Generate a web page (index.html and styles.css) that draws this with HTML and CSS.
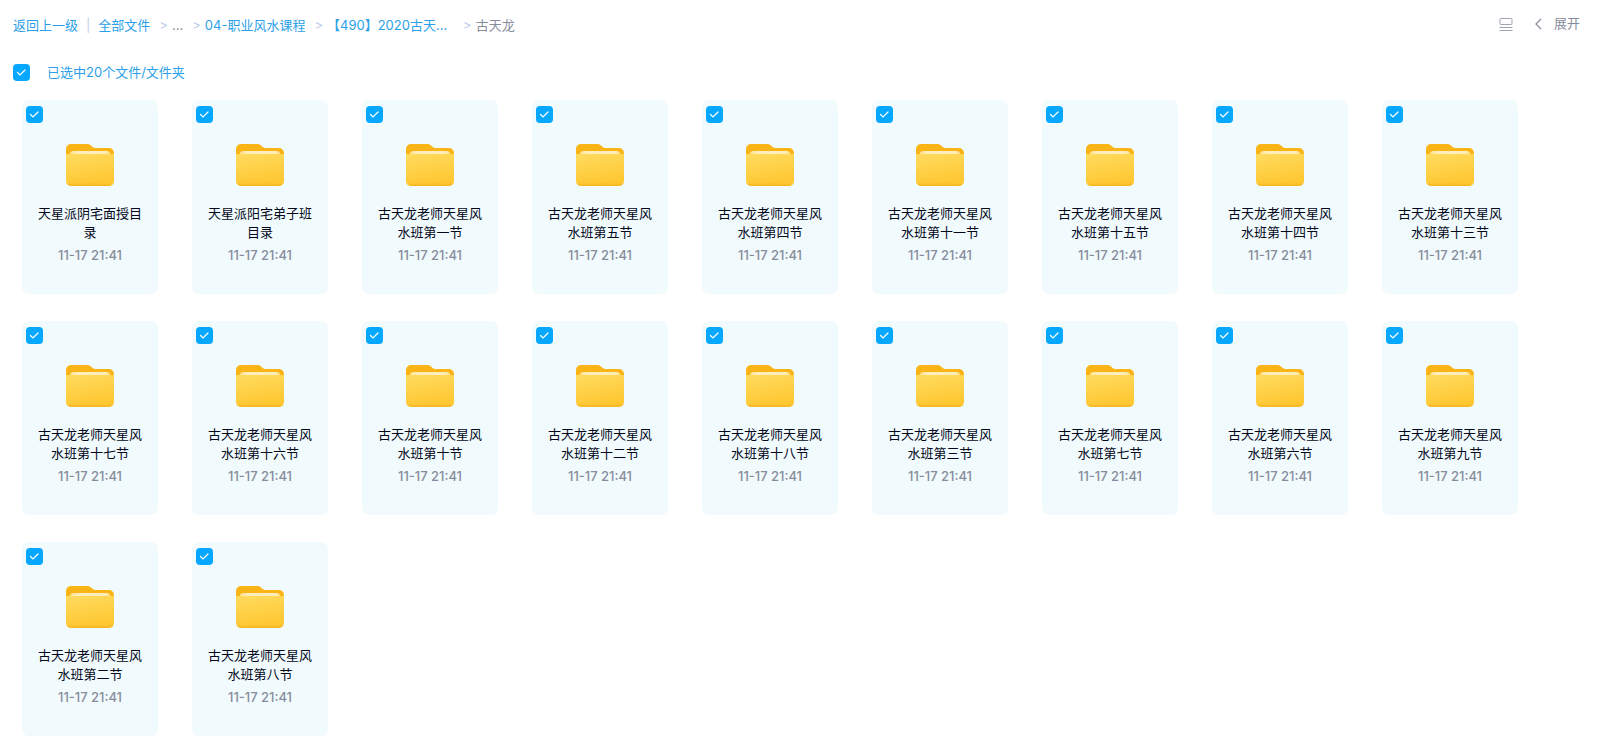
FILE: index.html
```html
<!DOCTYPE html>
<html lang="zh-CN">
<head>
<meta charset="utf-8">
<meta name="viewport" content="width=device-width, initial-scale=1">
<title>古天龙</title>
<link rel="stylesheet" href="styles.css">
</head>
<body>
<svg class="defs" aria-hidden="true">
  <defs>
    <linearGradient id="front" x1="0" y1="0" x2="0.25" y2="1"><stop offset="0" stop-color="#ffdb5f"/><stop offset="1" stop-color="#ffc732"/></linearGradient>
    <linearGradient id="edge" x1="0" y1="0" x2="0" y2="1"><stop offset="0.9" stop-color="#f5b520" stop-opacity="0"/><stop offset="1" stop-color="#f5b520"/></linearGradient>
    <linearGradient id="paper" x1="0" y1="0" x2="1" y2="0"><stop offset="0" stop-color="#ffe08a"/><stop offset="0.2" stop-color="#ffeebb"/><stop offset="0.85" stop-color="#ffeebb"/><stop offset="1" stop-color="#ffe08a"/></linearGradient>
    <symbol id="folder" viewBox="0 0 48 42">
      <path fill="#fbb416" d="M0 14V5a5 5 0 0 1 5-5h16c2 0 3 .6 4.300 1.800L27 3.200c.8.6 1.500.8 2.500.8H43a5 5 0 0 1 5 5v5z"/>
      <path fill="url(#paper)" d="M3.500 11c.5-2.500 1.500-4 4-4h33c2.500 0 3.500 1.500 4 4z"/>
      <path fill="url(#front)" d="M0 10h48v27a5 5 0 0 1-5 5H5a5 5 0 0 1-5-5z"/>
      <path fill="url(#edge)" d="M0 10h48v27a5 5 0 0 1-5 5H5a5 5 0 0 1-5-5z"/>
    </symbol>
  </defs>
</svg>
<header class="topbar">
  <nav class="crumbs" aria-label="路径">
    <a href="#">返回上一级</a><span class="bar">|</span><a href="#">全部文件</a><span class="sep">&gt;</span><span class="dots">...</span><span class="sep">&gt;</span><a href="#">04-职业风水课程</a><span class="sep">&gt;</span><a class="clipped" href="#">【490】2020古天...</a><span class="sep">&gt;</span><span class="current">古天龙</span>
  </nav>
  <div class="tools">
    <button class="view" type="button" aria-label="切换视图"><svg width="14" height="14" viewBox="0 0 14 14" fill="none" stroke="#a0a5b2"><rect x="1" y="1.500" width="12" height="6" rx="1"/><path d="M.5 10.500h13M.5 13.500h13"/></svg></button>
    <button class="expand" type="button"><svg width="7" height="12" viewBox="0 0 7 12" fill="none" stroke="#868b99" stroke-width="1.200"><path d="M6 1L1 6l5 5"/></svg>展开</button>
  </div>
</header>
<main>
  <div class="selection"><input type="checkbox" id="all" checked><label for="all">已选中20个文件/文件夹</label></div>
  <ul class="files">
    <li class="card"><input type="checkbox" id="f1" checked><svg class="folder"><use href="#folder"/></svg><label for="f1">天星派阴宅面授目录</label><time>11-17 21:41</time></li>
    <li class="card"><input type="checkbox" id="f2" checked><svg class="folder"><use href="#folder"/></svg><label for="f2">天星派阳宅弟子班目录</label><time>11-17 21:41</time></li>
    <li class="card"><input type="checkbox" id="f3" checked><svg class="folder"><use href="#folder"/></svg><label for="f3">古天龙老师天星风水班第一节</label><time>11-17 21:41</time></li>
    <li class="card"><input type="checkbox" id="f4" checked><svg class="folder"><use href="#folder"/></svg><label for="f4">古天龙老师天星风水班第五节</label><time>11-17 21:41</time></li>
    <li class="card"><input type="checkbox" id="f5" checked><svg class="folder"><use href="#folder"/></svg><label for="f5">古天龙老师天星风水班第四节</label><time>11-17 21:41</time></li>
    <li class="card"><input type="checkbox" id="f6" checked><svg class="folder"><use href="#folder"/></svg><label for="f6">古天龙老师天星风水班第十一节</label><time>11-17 21:41</time></li>
    <li class="card"><input type="checkbox" id="f7" checked><svg class="folder"><use href="#folder"/></svg><label for="f7">古天龙老师天星风水班第十五节</label><time>11-17 21:41</time></li>
    <li class="card"><input type="checkbox" id="f8" checked><svg class="folder"><use href="#folder"/></svg><label for="f8">古天龙老师天星风水班第十四节</label><time>11-17 21:41</time></li>
    <li class="card"><input type="checkbox" id="f9" checked><svg class="folder"><use href="#folder"/></svg><label for="f9">古天龙老师天星风水班第十三节</label><time>11-17 21:41</time></li>
    <li class="card"><input type="checkbox" id="f10" checked><svg class="folder"><use href="#folder"/></svg><label for="f10">古天龙老师天星风水班第十七节</label><time>11-17 21:41</time></li>
    <li class="card"><input type="checkbox" id="f11" checked><svg class="folder"><use href="#folder"/></svg><label for="f11">古天龙老师天星风水班第十六节</label><time>11-17 21:41</time></li>
    <li class="card"><input type="checkbox" id="f12" checked><svg class="folder"><use href="#folder"/></svg><label for="f12">古天龙老师天星风水班第十节</label><time>11-17 21:41</time></li>
    <li class="card"><input type="checkbox" id="f13" checked><svg class="folder"><use href="#folder"/></svg><label for="f13">古天龙老师天星风水班第十二节</label><time>11-17 21:41</time></li>
    <li class="card"><input type="checkbox" id="f14" checked><svg class="folder"><use href="#folder"/></svg><label for="f14">古天龙老师天星风水班第十八节</label><time>11-17 21:41</time></li>
    <li class="card"><input type="checkbox" id="f15" checked><svg class="folder"><use href="#folder"/></svg><label for="f15">古天龙老师天星风水班第三节</label><time>11-17 21:41</time></li>
    <li class="card"><input type="checkbox" id="f16" checked><svg class="folder"><use href="#folder"/></svg><label for="f16">古天龙老师天星风水班第七节</label><time>11-17 21:41</time></li>
    <li class="card"><input type="checkbox" id="f17" checked><svg class="folder"><use href="#folder"/></svg><label for="f17">古天龙老师天星风水班第六节</label><time>11-17 21:41</time></li>
    <li class="card"><input type="checkbox" id="f18" checked><svg class="folder"><use href="#folder"/></svg><label for="f18">古天龙老师天星风水班第九节</label><time>11-17 21:41</time></li>
    <li class="card"><input type="checkbox" id="f19" checked><svg class="folder"><use href="#folder"/></svg><label for="f19">古天龙老师天星风水班第二节</label><time>11-17 21:41</time></li>
    <li class="card"><input type="checkbox" id="f20" checked><svg class="folder"><use href="#folder"/></svg><label for="f20">古天龙老师天星风水班第八节</label><time>11-17 21:41</time></li>
  </ul>
</main>
</body>
</html>
```
FILE: styles.css
```css
* { box-sizing: border-box; }
body {
  margin: 0;
  background: #fff;
  color: #03081a;
  font: 400 13px/19px Inter, "Noto Sans CJK SC", sans-serif;
}
.defs { position: absolute; width: 0; height: 0; }

.topbar {
  display: flex;
  justify-content: space-between;
  padding: 14px 22px 0 13px;
}
.crumbs { display: flex; align-items: center; color: #878c9c; padding-top: 2px; }
.crumbs a { color: #2b9fe8; text-decoration: none; }
.bar { padding: 0 8px; color: #c4d0e6; }
.sep { padding: 0 4px 0 9px; color: #b9cbe6; }
.clipped { width: 127px; white-space: nowrap; }
.tools { display: flex; gap: 22px; align-items: center; height: 19px; }
.tools button {
  display: flex;
  align-items: center;
  padding: 0;
  border: 0;
  background: none;
  color: #868b99;
  font: inherit;
  cursor: pointer;
}
.expand { gap: 12px; }

input[type="checkbox"] {
  appearance: none;
  flex: none;
  width: 17px;
  height: 17px;
  margin: 0;
  border: 1px solid #c4d0e6;
  border-radius: 4px;
}
input[type="checkbox"]:checked {
  border: 0;
  background: #06a7ff url("data:image/svg+xml,%3Csvg xmlns='http://www.w3.org/2000/svg' viewBox='0 0 17 17' fill='none' stroke='white' stroke-width='1.2' stroke-linecap='round'%3E%3Cpath d='M4.500 8.500l2.500 2.500 5-5'/%3E%3C/svg%3E");
}

.selection {
  display: flex;
  align-items: center;
  gap: 17px;
  padding: 28px 13px 18px;
  color: #2b9fe8;
}
.files {
  display: flex;
  flex-wrap: wrap;
  gap: 27px 34px;
  margin: 0;
  padding: 0 22px 14px;
  list-style: none;
}
.card {
  display: flex;
  flex-direction: column;
  align-items: center;
  width: 136px;
  padding: 6px 4px 29px;
  border-radius: 7px;
  background: #f1fafd;
}
.card input { align-self: flex-start; }
.folder { width: 48px; height: 42px; margin: 21px 0 18px; }
.card label { width: 104px; text-align: center; }
.card time { margin-top: 4px; color: #878c9c; font-weight: 500; }
```
